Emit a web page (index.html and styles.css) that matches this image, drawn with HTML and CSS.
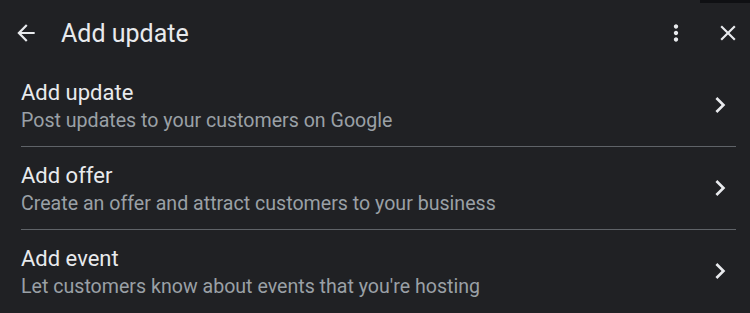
FILE: index.html
```html
<!DOCTYPE html>
<html lang="en">
<head>
    <meta charset="UTF-8">
    <title>Add update</title>
    <link rel="stylesheet" href="styles.css">
</head>
<body>
    <div id="panel">
        <div class="topbar">
            <button class="icon-btn back" aria-label="Back">
                <svg viewBox="0 0 24 24" width="26" height="26"><path d="M20 11H7.83l5.59-5.59L12 4l-8 8 8 8 1.41-1.41L7.83 13H20v-2z"/></svg>
            </button>
            <h1 class="title">Add update</h1>
            <button class="icon-btn more" aria-label="More">
                <svg viewBox="0 0 24 24" width="26" height="26"><path d="M12 8c1.1 0 2-.9 2-2s-.9-2-2-2-2 .9-2 2 .9 2 2 2zm0 2c-1.1 0-2 .9-2 2s.9 2 2 2 2-.9 2-2-.9-2-2-2zm0 6c-1.1 0-2 .9-2 2s.9 2 2 2 2-.9 2-2-.9-2-2-2z"/></svg>
            </button>
            <button class="icon-btn close" aria-label="Close">
                <svg viewBox="0 0 24 24" width="26" height="26"><path d="M19 6.41L17.59 5 12 10.59 6.41 5 5 6.41 10.59 12 5 17.59 6.41 19 12 13.41 17.59 19 19 17.59 13.41 12z"/></svg>
            </button>
        </div>

        <ul class="options">
            <li class="option">
                <div class="option-text">
                    <div class="option-title">Add update</div>
                    <div class="option-sub">Post updates to your customers on Google</div>
                </div>
                <svg class="chevron" viewBox="0 0 24 24" width="32" height="32"><path d="M10 6L8.59 7.41 13.17 12l-4.58 4.59L10 18l6-6z"/></svg>
            </li>
            <li class="option">
                <div class="option-text">
                    <div class="option-title">Add offer</div>
                    <div class="option-sub">Create an offer and attract customers to your business</div>
                </div>
                <svg class="chevron" viewBox="0 0 24 24" width="32" height="32"><path d="M10 6L8.59 7.41 13.17 12l-4.58 4.59L10 18l6-6z"/></svg>
            </li>
            <li class="option">
                <div class="option-text">
                    <div class="option-title">Add event</div>
                    <div class="option-sub">Let customers know about events that you're hosting</div>
                </div>
                <svg class="chevron" viewBox="0 0 24 24" width="32" height="32"><path d="M10 6L8.59 7.41 13.17 12l-4.58 4.59L10 18l6-6z"/></svg>
            </li>
        </ul>
    </div>
</body>
</html>
```

FILE: styles.css
```css
html, body {
    margin: 0;
    height: 100%;
    background-color: #202124;
}

body {
    font-family: Roboto, "Noto Sans", Arial, sans-serif;
    color: #e8eaed;
}

#panel {
    position: relative;
    height: 313px;
    overflow: hidden;
}

#panel::before {
    content: "";
    position: absolute;
    top: 0;
    right: 0;
    width: 50px;
    height: 3px;
    background-color: #0f1013;
}

.topbar {
    display: flex;
    align-items: center;
    box-sizing: border-box;
    height: 64px;
    padding: 2px 9px 0 13px;
}

.icon-btn {
    display: flex;
    align-items: center;
    justify-content: center;
    width: 26px;
    height: 26px;
    padding: 0;
    background: none;
    border: none;
    fill: #e8eaed;
    cursor: pointer;
}

.title {
    flex: 1;
    margin: 0 0 0 22px;
    font-size: 25px;
    font-weight: 400;
}

.more {
    margin-right: 26px;
}

.options {
    list-style: none;
    margin: 0;
    padding: 0 14px 0 21px;
}

.option {
    display: flex;
    align-items: center;
    height: 82px;
    border-bottom: 1px solid #5f6368;
}

.option:last-child {
    border-bottom: none;
}

.option-text {
    flex: 1;
    padding-top: 4px;
}

.option-title {
    font-size: 22px;
    line-height: 28px;
}

.option-sub {
    font-size: 19.6px;
    line-height: 28px;
    color: #9aa0a6;
}

.chevron {
    fill: #e8eaed;
}
```
